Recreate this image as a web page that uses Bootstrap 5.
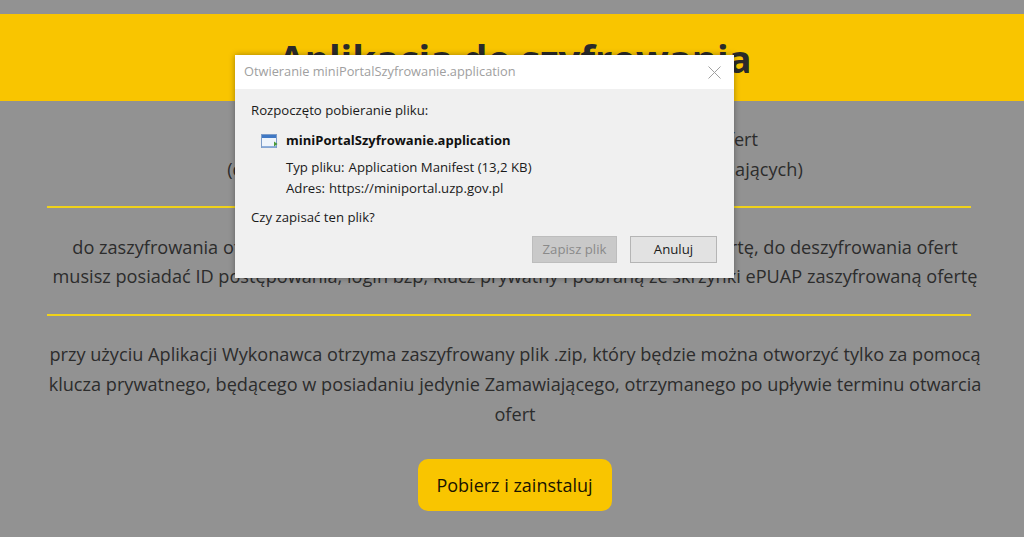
<!doctype html>
<html lang="pl"><head><meta charset="utf-8"><title>Aplikacja do szyfrowania</title>
<link href="https://cdn.jsdelivr.net/npm/bootstrap@5.3.0/dist/css/bootstrap.min.css" rel="stylesheet">
<style>
html,body{height:537px;overflow:hidden}
body{background:#929292;color:#2c2c2c;font-family:"Open Sans","Noto Sans",sans-serif;padding-top:14px;position:relative}
.banner{background:#f9c500;height:87px;overflow:hidden}
.banner h1{font-size:38.2px;font-weight:700;color:#2a2a2a;line-height:52px;margin:18px 0 0;padding-left:6px}
.page-txt{padding:24px 41px 0 47px;font-size:18.15px;line-height:29.8px}
.page-txt p{margin:0}
.rule{width:924px;height:2px;background:#f0d21a;margin:21px 0 25px}
.rule.second{margin:22px 0 24px}
.get-btn{background:#f9c500;color:#1a1400;font-size:18px;border:0;border-radius:10px;width:194px;height:52px;margin:29px 0 0 -1px;padding:1px 0 0}
.dlg{position:absolute;left:235px;top:55px;width:499px;height:223px;background:#f0f0f0;box-shadow:0 0 6px rgba(0,0,0,.35);font-size:13.2px;color:#1a1a1a}
.dlg-top{height:34px;background:#fff;color:#a0a0a0;font-size:12.8px;padding:0 13px 0 9px}
.dlg-main{padding:12px 17px 0 16px}
.dlg-main p{margin:0}
.dlg-file{padding:10px 0 0 10px}
.dlg-name{font-weight:700;font-size:13px;color:#111}
.dlg-meta{padding-left:25px;margin-top:8px;line-height:19px}
.dlg-meta>div+div{margin-top:2px}
.dlg-q{margin-top:10px!important}
.dlg-actions{margin-top:8px;gap:13px}
.dlg-btn{width:87px;height:27px;border:1px solid #b5b5b5;background:#e2e2e2;font-size:13.2px;color:#1a1a1a;padding:0}
.dlg-btn.off{background:#c9c9c9;border-color:#bdbdbd;color:#8a8a8a;width:85px}
</style></head>
<body>
<div class="banner text-center"><h1>Aplikacja do szyfrowania</h1></div>
<div class="page-txt text-center">
<p>Aplikacja służy do zaszyfrowania oraz deszyfrowania ofert<br>(dla użytku przez Wykonawców składających oferty i Zamawiających)</p>
<div class="rule"></div>
<p>do zaszyfrowania oferty musisz posiadać ID postępowania oraz podpisaną ofertę, do deszyfrowania ofert<br>musisz posiadać ID postępowania, login bzp, klucz prywatny i pobraną ze skrzynki ePUAP zaszyfrowaną ofertę</p>
<div class="rule second"></div>
<p>przy użyciu Aplikacji Wykonawca otrzyma zaszyfrowany plik .zip, który będzie można otworzyć tylko za pomocą klucza prywatnego, będącego w posiadaniu jedynie Zamawiającego, otrzymanego po upływie terminu otwarcia ofert</p>
<button class="btn get-btn" type="button">Pobierz i zainstaluj</button>
</div>
<div class="dlg" role="dialog">
<div class="dlg-top d-flex align-items-center justify-content-between"><span>Otwieranie miniPortalSzyfrowanie.application</span>
<svg width="13" height="13" viewBox="0 0 13 13"><path d="M.5.5l12 12M12.500.5l-12 12" stroke="#a0a0a0" fill="none"/></svg></div>
<div class="dlg-main">
<p>Rozpoczęto pobieranie pliku:</p>
<div class="dlg-file">
<div class="d-flex align-items-center gap-2">
<svg width="17" height="16" viewBox="0 0 17 16"><rect x=".5" y="1.500" width="15" height="13" fill="#eef4fb" stroke="#7c9cc8"/><rect x="1" y="2" width="14" height="3" fill="#3f78c4"/><rect x="1" y="13" width="14" height="1.500" fill="#8fb0dc"/><path d="M13 8.500l3.500 2.500-3.500 2.500z" fill="#4a9a3a"/></svg>
<span class="dlg-name">miniPortalSzyfrowanie.application</span></div>
<div class="dlg-meta">
<div class="d-flex gap-1"><span>Typ pliku:</span><span>Application Manifest (13,2 KB)</span></div>
<div class="d-flex gap-1"><span>Adres:</span><span>https://miniportal.uzp.gov.pl</span></div>
</div></div>
<p class="dlg-q">Czy zapisać ten plik?</p>
<div class="d-flex justify-content-end dlg-actions"><button class="dlg-btn off" type="button" disabled>Zapisz plik</button><button class="dlg-btn" type="button">Anuluj</button></div>
</div></div>
</body></html>
